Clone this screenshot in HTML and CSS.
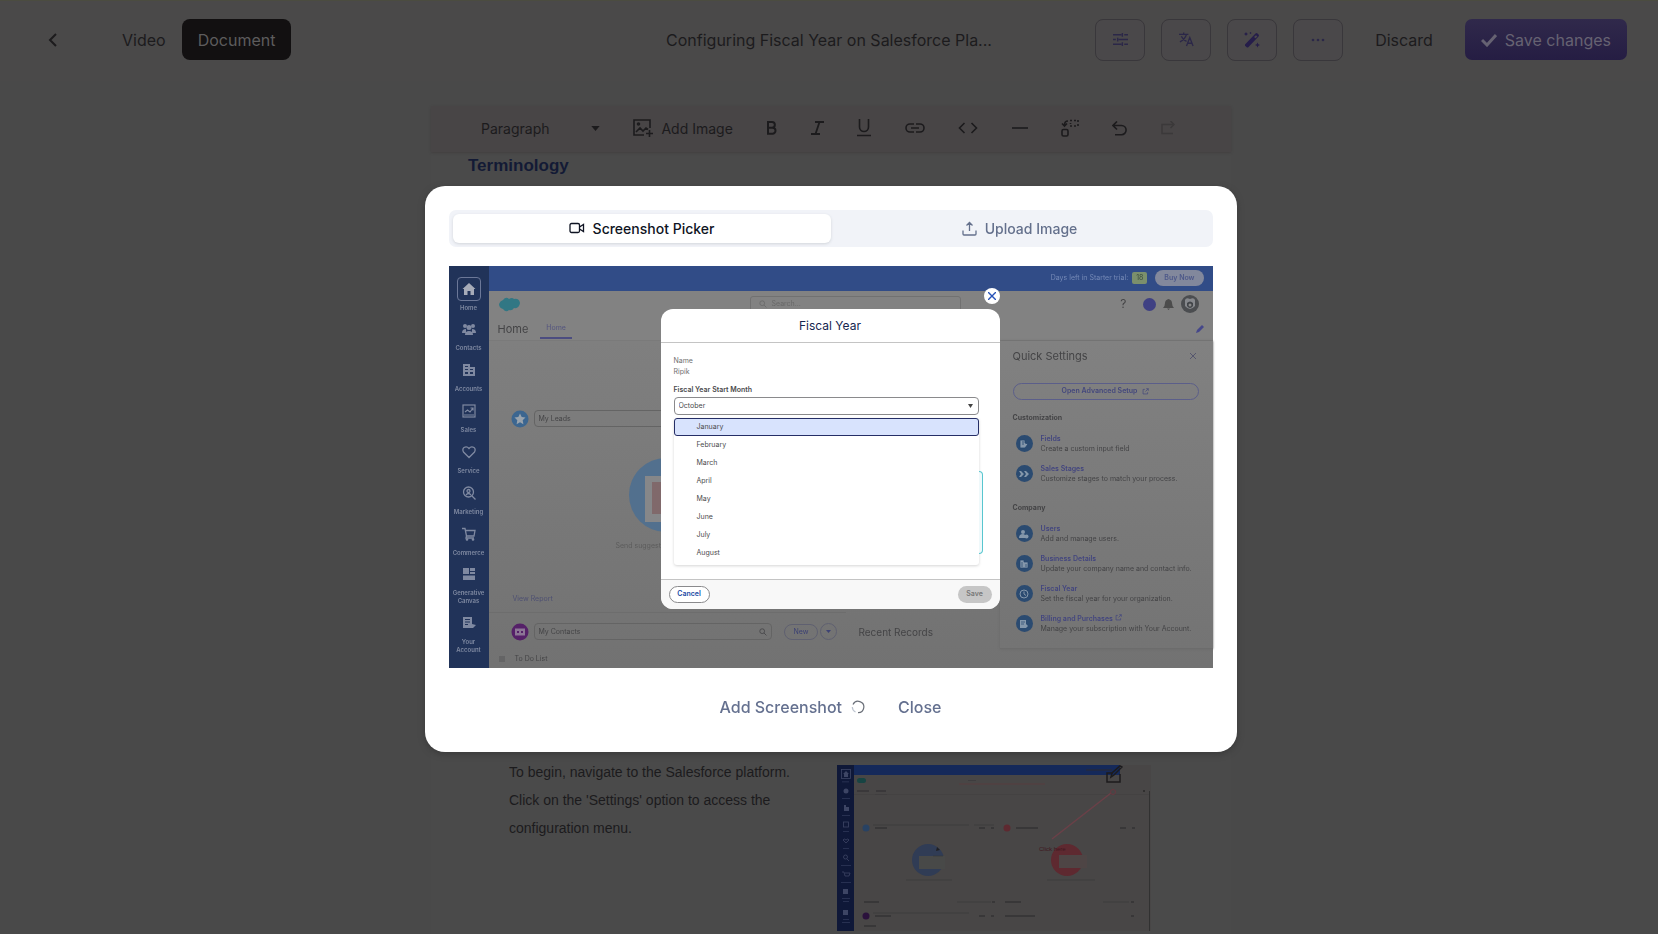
FILE: index.html
```
<!DOCTYPE html>
<html lang="en">
<head>
<meta charset="utf-8">
<title>Configuring Fiscal Year on Salesforce Platform</title>
<link rel="stylesheet" href="styles.css">
</head>
<body>
<svg class="sprite" aria-hidden="true">
  <symbol id="open" viewBox="0 0 10 10"><path d="M4 2H1.500v6.500H8V6M6 1h3v3M9 1 5 5" fill="none" stroke="currentColor"/></symbol>
  <symbol id="mag" viewBox="0 0 10 10"><circle cx="4" cy="4" r="3" fill="none" stroke="currentColor"/><path d="m6.300 6.300 3 3" stroke="currentColor"/></symbol>
  <symbol id="caret" viewBox="0 0 10 6"><path d="M0 0h10L5 6z" fill="currentColor"/></symbol>
</svg>

<header class="topbar">
  <div class="topbar-left">
    <button class="back" aria-label="Back"><svg width="10" height="16" viewBox="0 0 10 16"><path d="M8 2 2 8l6 6" fill="none" stroke="currentColor" stroke-width="2"/></svg></button>
    <nav class="modes">
      <button class="mode">Video</button>
      <button class="mode mode-on">Document</button>
    </nav>
  </div>
  <h1 class="doc-name">Configuring Fiscal Year on Salesforce Pla...</h1>
  <div class="topbar-right">
    <button class="tool" aria-label="Settings"><svg width="15" height="15" viewBox="0 0 16 16" fill="none" stroke="currentColor" stroke-width="1.500"><path d="M0 3h9M12 3h4M0 8h3M6 8h10M0 13h9M12 13h4M10 1v4M5 6v4M10 11v4"/></svg></button>
    <button class="tool" aria-label="Translate"><svg width="15" height="15" viewBox="0 0 16 16" fill="none" stroke="currentColor" stroke-width="1.400"><path d="M0 2.500h10M5 .5v2M8 2.500C7 6 4 9 1 10.500M2.500 4.500C4 8 6 9 8 10M8 15l3.500-9L15 15M9.300 12h4.500"/></svg></button>
    <button class="tool wand" aria-label="Enhance"><svg width="16" height="16" viewBox="0 0 16 16" fill="currentColor"><path d="M1 12.500 11.500 1.500Q12.500.5 13.500 1.500l1 1q1 1 0 2L4.500 15Q3.500 16 2.500 15L1 13.800zM10 5l1.500 1.300 1.800-1.800L12 3.200z" fill-rule="evenodd"/><path d="m2 0 .7 1.300L4 2l-1.300.7L2 4l-.7-1.300L0 2l1.300-.7zM6.500 0l1 1-1 1-1-1zM13.500 10.500l.8 1.700 1.700.8-1.700.8-.8 1.700-.8-1.700L11 13l1.700-.8z"/></svg></button>
    <button class="tool" aria-label="More"><svg width="14" height="4" viewBox="0 0 14 4" fill="currentColor"><circle cx="2" cy="2" r="1.300"/><circle cx="7" cy="2" r="1.300"/><circle cx="12" cy="2" r="1.300"/></svg></button>
    <button class="discard">Discard</button>
    <button class="save"><svg width="16" height="14" viewBox="0 0 16 14"><path d="m1 7 5 5L15 2" fill="none" stroke="currentColor" stroke-width="3"/></svg>Save changes</button>
  </div>
</header>

<main class="doc">
  <div class="editbar">
    <label class="block-type">
      <select aria-label="Block type"><option>Paragraph</option></select>
      <svg width="9" height="5"><use href="#caret"/></svg>
    </label>
    <button class="add-image"><svg width="20" height="18" viewBox="0 0 20 18" fill="none" stroke="currentColor" stroke-width="1.600"><path d="M17 9V1H1v15h10M3 13l4-4 3 3 3-3 2 1.500M16.500 11v7M13 14.500h7"/><circle cx="5.500" cy="5" r="1"/></svg>Add Image</button>
    <button aria-label="Bold"><svg width="11" height="14" viewBox="0 0 11 14" fill="none" stroke="currentColor" stroke-width="2"><path d="M2 1h4a2.700 2.700 0 0 1 0 5.700H2zM2 6.700h4.500a3 3 0 0 1 0 6H2z"/></svg></button>
    <button aria-label="Italic"><svg width="13" height="14" viewBox="0 0 13 14" fill="none" stroke="currentColor" stroke-width="1.800"><path d="M4 1h9M0 13h9M8.500 1l-4 12"/></svg></button>
    <button aria-label="Underline"><svg width="14" height="18" viewBox="0 0 14 18" fill="none" stroke="currentColor" stroke-width="1.600"><path d="M2.500 0v8a4.500 4.500 0 0 0 9 0V0M0 16.500h14"/></svg></button>
    <button aria-label="Link"><svg width="20" height="10" viewBox="0 0 20 10" fill="none" stroke="currentColor" stroke-width="1.600"><path d="M9 1H5a4 4 0 0 0 0 8h4M11 1h4a4 4 0 0 1 0 8h-4M6 5h8"/></svg></button>
    <button aria-label="Code"><svg width="20" height="12" viewBox="0 0 20 12" fill="none" stroke="currentColor" stroke-width="1.600"><path d="M6.500 1 1.500 6l5 5M13.500 1l5 5-5 5"/></svg></button>
    <button aria-label="Divider"><svg width="16" height="2" viewBox="0 0 16 2"><path d="M0 1h16" stroke="currentColor" stroke-width="1.600"/></svg></button>
    <button aria-label="Replace block"><svg width="18" height="18" viewBox="0 0 18 18" fill="none" stroke="currentColor" stroke-width="1.600"><rect x="1" y="10.500" width="6" height="6.500" rx="1.500"/><path d="M7 2Q3.500 2 3.500 6M1 4.500 3.500 7 6 4.500"/><path d="M9 1.500h2M13 1.500h2M17 1v2M17 5v2M9 7h2M13 7h2M9.500 4v1"/></svg></button>
    <button aria-label="Undo"><svg width="15" height="15" viewBox="0 0 15 15" fill="none" stroke="currentColor" stroke-width="1.600"><path d="M5 .5 1 4.500l4 4M1 4.500h8.500a4.600 4.600 0 0 1 0 9.200H3"/></svg></button>
    <button class="off" aria-label="Redo" disabled><svg width="14" height="14" viewBox="0 0 14 14" fill="none" stroke="currentColor" stroke-width="1.500"><path d="M9.500 0 13 3.500 9.500 7M13 3.500H1v9h11"/></svg></button>
  </div>
  <h2 class="section-title">Terminology</h2>
  <section class="step">
    <p>To begin, navigate to the Salesforce platform. Click on the 'Settings' option to access the configuration menu.</p>
    <figure class="step-shot">
      <svg viewBox="0 0 314 166" aria-label="Salesforce home page">
        <rect width="314" height="166" fill="#484646"/>
        <rect width="17" height="166" fill="#0f1838"/><rect x="17" width="266" height="10" fill="#15295a"/>
        <rect x="4.500" y="4.500" width="9" height="9" fill="none" stroke="#3d4564" stroke-width=".8"/>
        <g fill="#3d4564"><path d="m6 9 3-3 3 3h-1v3H7V9z"/><circle cx="9" cy="26" r="2.500"/><path d="M7 40h2v2h3v4H7zM6 145h5v5H6zM6 124h5v5H6z"/></g>
        <path d="M5 16.500h7v.7H5zM5 33h8v.7H5zM5 50h8v.7H5zM6 66h6v.7H6zM6 83h6v.7H6zM4 100h10v.7H4zM4 117h10v.7H4zM5 133h8v.7H5zM6 136h6v.7H6zM6 154h6v.7H6zM5 157h8v.7H5z" fill="#30385a"/>
        <g fill="none" stroke="#3d4564" stroke-width=".8"><rect x="6.500" y="57" width="5" height="5"/><path d="m9 78-3-3q1-2 3 0 2-2 3 0zM5 107h2l1 4h4l1-3H8"/><circle cx="8.500" cy="92" r="2"/><path d="m10 94 2 2"/></g>
        <rect x="20" y="13" width="9" height="5" rx="2.500" fill="#174443"/>
        <path d="M20 26h12M39 26h10M249 5h26" stroke="#2d2b2e"/><path d="M38 29.500h12M131 15.500h8" stroke="#373639" stroke-width=".6"/><path d="M17 29.500h295" stroke="#413f40" stroke-width=".6"/>
        <path d="M122 19h86" stroke="#5a3b3d" stroke-width=".8"/><path d="M312.500 26v140" stroke="#2c2c2c" stroke-width=".8"/>
        <circle cx="29" cy="63" r="3.500" fill="#284263"/><circle cx="91" cy="95" r="16" fill="#303c55"/>
        <circle cx="170" cy="63" r="3.500" fill="#5e2930"/><circle cx="230" cy="95" r="16" fill="#5e2930"/>
        <rect x="82" y="91" width="26" height="13" fill="#484948"/><rect x="222" y="90" width="28" height="13" fill="#4e4545"/>
        <circle cx="29" cy="151" r="3.500" fill="#2b123c"/>
        <path d="M38 63h12M179 63h22M142 63h6M154 63h3M283 63h6M295 63h3M38 151h16M142 151h6M154 151h3M168 151h30M27 137h15M168 137h16M294 151h3M27 161h12M155 137h3M294 137h3" stroke="#29282a"/>
        <path d="M69 115h46M210 115h48M120 137h34M266 137h26M137 60h20M36 148h96M96 91h10M36 60h96" stroke="#363537" stroke-width=".6"/>
        <path d="m100 82 3 3-4 1z" fill="#202023"/>
        <path d="m215 74 59-46" stroke="#6b4048" stroke-width="1.500"/><circle cx="276" cy="27" r="2.500" fill="none" stroke="#683840"/><circle cx="307" cy="26" r="1" fill="#292929"/>
        <text x="202" y="86" class="tip">Click here</text>
      </svg>
      <button class="edit-shot" aria-label="Edit image"><svg width="18" height="18" viewBox="0 0 18 18" fill="none" stroke="currentColor" stroke-width="1.500"><path d="M8 8H2v9h13V9M6 12l1-4L15 1l2 1-8 8z"/></svg></button>
    </figure>
  </section>
</main>

<div class="backdrop">
<div class="modal" role="dialog" aria-label="Add screenshot">
  <div class="tabs" role="tablist">
    <button class="tab tab-on" role="tab" aria-selected="true"><svg width="16" height="12" viewBox="0 0 16 12" fill="none" stroke="currentColor" stroke-width="1.300"><rect x="1" y="1.500" width="9.500" height="9" rx="1.500"/><path d="m10.500 5 4-2.500v7l-4-2.500"/></svg>Screenshot Picker</button>
    <button class="tab" role="tab" aria-selected="false"><svg width="15" height="15" viewBox="0 0 15 15" fill="none" stroke="currentColor" stroke-width="1.300"><path d="M1 9.500V13q0 1 1 1h11q1 0 1-1V9.500M7.500 10V1.500M4.500 4.500l3-3 3 3"/></svg>Upload Image</button>
  </div>

  <div class="shot">
    <aside class="rail">
      <div class="rail-item"><span class="home-box"><svg width="14" height="14" viewBox="0 0 14 14" fill="currentColor"><path d="m7 1 6.500 6H12v6H8.500V9h-3v4H2V7H.5z"/></svg></span>Home</div>
      <div class="rail-item"><svg width="14" height="14" viewBox="0 0 14 14" fill="currentColor"><circle cx="3" cy="4" r="2"/><circle cx="11" cy="4" r="2"/><circle cx="7" cy="5.500" r="2.500"/><path d="M0 11q0-4 4-4v4zM14 11q0-4-4-4v4zM3 13q0-4 4-4t4 4z"/></svg>Contacts</div>
      <div class="rail-item"><svg width="14" height="14" viewBox="0 0 14 14" fill="none" stroke="currentColor" stroke-width="2"><path d="M2 13V2h5v11M7 5h5v8M1 12h12M3 5h3M3 8h9"/></svg>Accounts</div>
      <div class="rail-item"><svg width="14" height="14" viewBox="0 0 14 14" fill="none" stroke="currentColor" stroke-width="1.200"><rect x="1" y="1" width="12" height="12"/><path d="m3 8 2.500-2L8 8l3-4M8.500 4H11v2.500M2 11h10"/></svg>Sales</div>
      <div class="rail-item"><svg width="14" height="14" viewBox="0 0 14 14" fill="none" stroke="currentColor" stroke-width="1.300"><path d="M7 12.500 1.500 7Q0 4 2 2.500q3-1.500 5 1 2-2.500 5-1Q14 4 12.500 7z"/></svg>Service</div>
      <div class="rail-item"><svg width="14" height="14" viewBox="0 0 14 14" fill="none" stroke="currentColor" stroke-width="1.300"><circle cx="6.500" cy="6" r="5"/><circle cx="6.500" cy="5" r="1.500"/><path d="M4 9q2.500-3 5 0M10 10l3.500 3.500"/></svg>Marketing</div>
      <div class="rail-item"><svg width="14" height="14" viewBox="0 0 14 14" fill="none" stroke="currentColor" stroke-width="1.300"><path d="M0 1.500h3L4.500 9H12l1-5.500H3.500M4.500 9 4 11h8"/><circle cx="5" cy="12.500" r=".7"/><circle cx="11" cy="12.500" r=".7"/></svg>Commerce</div>
      <div class="rail-item rail-tall"><svg width="14" height="14" viewBox="0 0 14 14" fill="currentColor"><path d="M1 1h6v6H1zM8 1h5v3H8zM8 5h5v2H8zM1 8.500h12V13H1z"/></svg>Generative Canvas</div>
      <div class="rail-item rail-tall"><svg width="14" height="14" viewBox="0 0 14 14" fill="currentColor"><path d="M1 1h9v7l4 1-3 3H1zM3 3v1h5V3zM3 5.500v1h5v-1zM3 8v1h3V8z" fill-rule="evenodd"/></svg>Your Account</div>
    </aside>
    <div class="app">
      <div class="trial">Days left in Starter trial: <b>18</b><span class="buy">Buy Now</span></div>
      <div class="app-head">
        <div class="app-search"><svg width="8" height="8"><use href="#mag"/></svg>Search...</div>
        <svg class="cloud" width="21" height="15" viewBox="0 0 21 15"><path d="M4 3q3-4 6-1 3-2 5 0 5-1 6 4-1 6-6 5-2 3-5 2-3 3-6-1-4-1-4-5 1-3 4-4z" fill="currentColor"/></svg>
        <div class="app-icons">
          <span class="help">?</span><span class="dot"></span>
          <svg width="11" height="11" viewBox="0 0 11 11" fill="#4c4c4c"><path d="M0 9q2-2 2-5 0-3 3.500-4Q9 1 9 4q0 3 2 5zM4 9.500h3L5.500 11z"/></svg>
          <svg width="18" height="18" viewBox="0 0 18 18"><circle cx="9" cy="9" r="9" fill="#4b4d50"/><path d="M4 5q1-3 5-1 4-2 5 1v6q-5 6-10 0z" fill="#85878b"/><path d="M6 8q3-3 6 0v3q-3 4-6 0z" fill="#414448"/><circle cx="9" cy="10" r="1.500" fill="#8a8a8a"/></svg>
        </div>
      </div>
      <div class="app-nav"><span class="app-title">Home</span><span class="app-tab">Home</span><svg width="8" height="8" viewBox="0 0 8 8"><path d="M0 8 1 5l5-5 2 2-5 5z" fill="#45478a"/></svg></div>
      <div class="app-body">
        <div class="cards">
          <div class="card">
            <div class="finder"><svg width="18" height="18" viewBox="0 0 18 18"><circle cx="9" cy="9" r="8.500" fill="#3c6690"/><path d="m9 3.500 1.700 3.600 3.800.5-2.800 2.700.7 3.900L9 12.300l-3.400 1.900.7-3.900L3.500 7.600l3.800-.5z" fill="#99a3ad"/></svg><span class="find-box">My Leads</span></div>
            <svg class="art" width="74" height="74" viewBox="0 0 74 74"><circle cx="37" cy="37" r="37" fill="#52708e"/><rect x="16" y="18" width="42" height="46" fill="#868789"/><rect x="23" y="24" width="35" height="32" fill="#80696b"/></svg>
            <p class="hint">Send suggest</p>
            <span class="report">View Report</span>
          </div>
          <div class="card-row">
            <div class="finder grow"><svg width="18" height="18" viewBox="0 0 18 18"><circle cx="9" cy="9" r="8.500" fill="#552068"/><path d="M4 5.500h10v7H4z" fill="#8c7595"/><path d="M6 8h2v2H6zM10 8h2v2h-2z" fill="#552068"/></svg><span class="find-box">My Contacts<svg width="8" height="8"><use href="#mag"/></svg></span></div>
            <span class="new">New</span><span class="new-more"><svg width="5" height="3"><use href="#caret"/></svg></span>
            <span class="recent">Recent Records</span>
          </div>
          <div class="todo"><svg width="6" height="6" viewBox="0 0 6 6"><path d="M0 1h6M0 3h6M0 5h6" stroke="currentColor" stroke-width=".6"/></svg>To Do List</div>
        </div>
        <div class="quick">
          <div class="quick-head">Quick Settings<svg width="6" height="6" viewBox="0 0 6 6"><path d="m0 0 6 6M6 0 0 6" stroke="#55566e"/></svg></div>
          <div class="advanced">Open Advanced Setup<svg width="7" height="7"><use href="#open"/></svg></div>
          <h4>Customization</h4>
          <ul>
            <li><i><svg width="10" height="10" viewBox="0 0 10 10"><path d="M1 1h5v3l3 1-3 4H1zM3 3h2M3 5h2" fill="#8497ab" stroke="#24466e" stroke-width=".8"/></svg></i><p><b>Fields</b>Create a custom input field</p></li>
            <li><i><svg width="10" height="10" viewBox="0 0 10 10"><path d="M0 2h2l3 3-3 3H0l2-3zM5 2h2l3 3-3 3H5l2-3z" fill="#8497ab"/></svg></i><p><b>Sales Stages</b>Customize stages to match your process.</p></li>
          </ul>
          <h4>Company</h4>
          <ul>
            <li><i><svg width="10" height="10" viewBox="0 0 10 10" fill="#8497ab"><circle cx="4" cy="3" r="2"/><path d="M0 9q0-4 4-4 1 0 2 1v3z"/><circle cx="7.500" cy="7.500" r="2"/></svg></i><p><b>Users</b>Add and manage users.</p></li>
            <li><i><svg width="10" height="10" viewBox="0 0 10 10"><path d="M1 9V1h4v2h4v6zM3 3v5M7 5v3" fill="#8497ab" stroke="#24466e" stroke-width=".7"/></svg></i><p><b>Business Details</b>Update your company name and contact info.</p></li>
            <li><i><svg width="10" height="10" viewBox="0 0 10 10" fill="none" stroke="#8497ab"><circle cx="5" cy="5" r="4"/><path d="M5 2.500V5l2 1.500"/></svg></i><p><b>Fiscal Year</b>Set the fiscal year for your organization.</p></li>
            <li><i><svg width="10" height="10" viewBox="0 0 10 10"><path d="M1 1h6v4l2 2-2 2H1z" fill="#8497ab"/><path d="M2 3h4M2 5h3" stroke="#24466e" stroke-width=".7"/></svg></i><p><b>Billing and Purchases <svg width="7" height="7"><use href="#open"/></svg></b>Manage your subscription with Your Account.</p></li>
          </ul>
        </div>
      </div>
    </div>

    <div class="fiscal">
      <button class="fiscal-x" aria-label="Close Fiscal Year"><svg width="8" height="8" viewBox="0 0 8 8"><path d="m0 0 8 8M8 0 0 8" stroke="currentColor" stroke-width="1.400"/></svg></button>
      <h3>Fiscal Year</h3>
      <div class="fiscal-body">
        <dl><dt>Name</dt><dd>Ripik</dd></dl>
        <label class="month-label" for="month">Fiscal Year Start Month</label>
        <div class="month">
          <select id="month"><option>October</option></select>
          <svg width="5" height="4" viewBox="0 0 5 4"><path d="M0 0h5L2.500 4z" fill="#444"/></svg>
        </div>
        <div class="month-area">
          <ul class="months" role="listbox" aria-label="Months">
            <li class="picked" role="option" aria-selected="true">January</li>
            <li role="option">February</li><li role="option">March</li><li role="option">April</li>
            <li role="option">May</li><li role="option">June</li><li role="option">July</li><li role="option">August</li>
          </ul>
          <div class="note"></div>
        </div>
      </div>
      <div class="fiscal-foot"><button class="cancel">Cancel</button><button class="fsave">Save</button></div>
    </div>
  </div>

  <div class="modal-foot">
    <button>Add Screenshot<svg width="14" height="14" viewBox="0 0 14 14" fill="none"><path d="M2 4.500A5.700 5.700 0 1 1 7 12.700" stroke="#6a6f78" stroke-width="1.200"/><path d="M1.300 7A5.700 5.700 0 0 0 4.500 12" stroke="#bcc3cf" stroke-width="1.200"/></svg></button>
    <button>Close</button>
  </div>
</div>
</div>
</body>
</html>
```
FILE: styles.css
```
* { box-sizing: border-box; }
body { display: flex; flex-direction: column; margin: 0; height: 100vh; overflow: hidden; background: #494949; color: #1c1b1d; font-family: Inter, "Liberation Sans", sans-serif; border-top: 1px solid #4b4c40; }
button, select { font: inherit; color: inherit; background: none; border: 0; padding: 0; }
button { display: flex; align-items: center; justify-content: center; }
h1, h2, h3, h4, p, ul, dl, dd, figure { margin: 0; padding: 0; }
ul { list-style: none; }
svg { flex: none; }
.sprite { display: none; }

.topbar { display: grid; grid-template-columns: 1fr auto 1fr; align-items: center; height: 80px; padding: 0 31px 3px; background: #4a4949; font-size: 16px; }
.topbar-left, .topbar-right, .modes { display: flex; align-items: center; }
.back { margin: 0 48px 0 17px; }
.mode { height: 41px; padding: 0 16px; border-radius: 8px; }
.mode-on { background: #121011; color: #5d5c5d; }
.doc-name { font-size: 16px; font-weight: 400; }
.topbar-right { justify-content: flex-end; gap: 16px; }
.tool { width: 50px; height: 42px; border: 1px solid #39373b; border-radius: 8px; background: #4a484a; color: #2b2748; }
.wand { color: #251d4a; }
.discard { padding: 0 16px; }
.save { height: 41px; gap: 8px; padding: 0 16px; border-radius: 7px; background: linear-gradient(#30294b, #251d43); color: #666272; }

.doc { flex: 1; min-height: 0; width: 800px; max-width: 100%; margin: 25px 0 0 calc(50% - 398px); background: #4a4a4a; }
.editbar { display: flex; align-items: center; justify-content: space-between; height: 46px; padding: 0 56px 2px 50px; background: #484546; font-size: 14px; box-shadow: 0 1px 2px #423f40; }
.block-type { display: flex; align-items: center; width: 119px; }
.block-type select { appearance: none; flex: 1; }
.add-image { gap: 8px; }
.off { color: #3b393a; }
.section-title { padding: 4px 37px; font: bold 17px/20px "Liberation Sans", Arial, sans-serif; color: #131a35; }
.step { display: flex; justify-content: space-between; margin-top: 578px; padding: 0 80px 0 78px; font: 14px/28px "Liberation Sans", Arial, sans-serif; }
.step p { width: 290px; }
.step-shot { position: relative; width: 314px; margin: 7px 0 0 16px; }
.step-shot > svg { display: block; width: 100%; }
.tip { font: 6px "Liberation Sans", sans-serif; fill: #3f1820; }
.edit-shot { position: absolute; top: 0; right: 28px; }

.backdrop { position: fixed; inset: 0; display: flex; align-items: center; justify-content: center; padding: 3px 0 0 3px; }
.modal { width: 812px; max-width: 100%; padding: 24px; border-radius: 20px; background: #fff; box-shadow: 0 2px 6px #3a3a3a; }
.tabs { display: flex; padding: 4px; border-radius: 7px; background: #f1f3f8; font-size: 14px; font-weight: 500; color: #64708c; }
.tab { flex: 1; gap: 8px; height: 29px; border-radius: 6px; }
.tab-on { background: #fff; color: #0f1423; box-shadow: 0 1px 3px #d2d5da; }

.shot { position: relative; display: flex; margin-top: 19px; height: 402px; color: #444446; font-size: 7px; line-height: 10px; background: #828282; }
.rail { width: 40px; padding-top: 8px; background: #213359; color: #7f89a1; font-size: 6px; line-height: 8px; font-weight: 600; text-align: center; }
.rail-item { display: flex; flex-direction: column; align-items: center; justify-content: flex-end; gap: 8px; height: 41px; padding-bottom: 1px; }
.rail-item:first-child { height: 38px; gap: 3px; padding-bottom: 0; }
.rail-tall { height: 49px; padding: 0 4px 2px; }
.home-box { display: flex; align-items: center; justify-content: center; width: 24px; height: 24px; border: 1px solid #6c7898; border-radius: 4px; color: #a6abb8; }
.app { flex: 1; display: flex; flex-direction: column; min-width: 0; }
.trial { display: flex; align-items: center; justify-content: flex-end; gap: 4px; height: 25px; padding-right: 9px; background: #314c87; color: #7589b6; }
.trial b { padding: 1px 4px; border-radius: 2px; background: #7b8f6c; color: #37493d; font-weight: 400; }
.buy { margin-left: 4px; padding: 3px 9px; border-radius: 9px; background: #82889c; color: #4d5889; font-weight: 600; }
.app-head { display: grid; grid-template-columns: 261px 211px 1fr; align-items: center; height: 27px; padding-right: 14px; }
.cloud { grid-column: 1; grid-row: 1; margin-left: 10px; color: #317784; }
.app-search { grid-column: 2; grid-row: 1; display: flex; align-items: center; gap: 5px; height: 17px; padding-left: 8px; border: 1px solid #717171; border-radius: 3px; color: #686868; }
.app-icons { grid-column: 3; display: flex; align-items: center; justify-content: flex-end; gap: 7px; }
.help { font-size: 12px; margin-right: 9px; }
.dot { width: 13px; height: 13px; border-radius: 50%; background: #3f4083; }
.app-nav { display: flex; align-items: center; height: 23px; padding: 0 9px; border-bottom: 1px solid #7a7a7a; }
.app-title { font-size: 11px; margin-right: 12px; }
.app-tab { margin: 3px auto 0 0; padding: 2px 6px 4px; border-bottom: 2px solid #4c4d80; color: #54557f; }
.app-body { flex: 1; display: flex; min-height: 0; background: linear-gradient(#7f7f7f, #727272); }
.cards { flex: 1; display: flex; flex-direction: column; }
.card { display: flex; flex-direction: column; width: 357px; padding: 69px 0 0 22px; height: 272px; border-bottom: 1px solid #6d6d6d; }
.finder { display: flex; align-items: center; gap: 5px; }
.find-box { flex: 1; display: flex; align-items: center; justify-content: space-between; height: 17px; padding: 0 4px; border: 1px solid #646464; border-radius: 4px; }
.art { margin: 30px 0 0 118px; }
.hint { padding: 9px 0 0 105px; white-space: nowrap; color: #5c5c5c; }
.report { margin-top: 43px; padding-left: 2px; color: #4e5072; }
.card-row { display: flex; align-items: center; height: 38px; padding-left: 22px; }
.grow { width: 261px; }
.new { margin-left: 12px; padding: 2px 9px; border: 1px solid #5f6070; border-radius: 9px; color: #3d4274; }
.new-more { display: flex; align-items: center; justify-content: center; width: 17px; height: 17px; margin-left: 2px; border: 1px solid #5f6070; border-radius: 50%; color: #3d4274; }
.recent { margin-left: 21px; font-size: 10px; white-space: nowrap; }
.todo { display: flex; gap: 10px; align-items: center; padding: 3px 0 0 10px; }
.quick { width: 213px; height: 308px; padding: 8px 14px 0 13px; background: linear-gradient(#818181, #747474); border-bottom: 1px solid #6c6c6c; box-shadow: 0 0 2px #686868; }
.quick-head { display: flex; align-items: center; justify-content: space-between; font-size: 11px; line-height: 14px; padding-right: 3px; }
.advanced { display: flex; align-items: center; justify-content: center; gap: 5px; height: 17px; margin: 20px 0 13px; border: 1px solid #5b5e8a; border-radius: 9px; color: #43477d; font-weight: 600; }
.quick h4 { font-size: 7px; line-height: 10px; }
.quick li { display: flex; align-items: center; gap: 8px; height: 30px; padding-left: 3px; }
.quick ul { padding: 6px 0 14px; }
.quick i { display: flex; align-items: center; justify-content: center; width: 17px; height: 17px; border-radius: 50%; background: #2b4b71; }
.quick b { display: block; color: #43467f; font-weight: 600; }
.quick p { white-space: nowrap; }

.fiscal { position: absolute; top: 43px; left: 212px; width: 339px; border-radius: 12px; background: #fff; }
.fiscal-x { position: absolute; top: -21px; right: 0; width: 16px; height: 16px; border-radius: 50%; background: #fff; color: #2752b8; }
.fiscal h3 { height: 34px; border-bottom: 1px solid #c4c4c4; font-size: 12px; line-height: 33px; font-weight: 400; text-align: center; color: #15264f; }
.fiscal-body { padding: 12px 17px 14px 13px; color: #4a4a4c; }
.fiscal dl { line-height: 11px; color: #707070; }
.month-label { display: block; margin: 8px 0 2px; font-weight: 600; line-height: 10px; }
.month { display: flex; align-items: center; width: 305px; height: 18px; padding: 0 5px 0 4px; border: 1px solid #8a8a8c; border-radius: 4px; }
.month select { appearance: none; flex: 1; }
.month-area { display: flex; align-items: flex-end; margin-top: 3px; }
.months { width: 305px; border-radius: 3px; box-shadow: 0 1px 3px #d5d5d5; padding-bottom: 3px; }
.months li { height: 18px; padding-left: 23px; line-height: 18px; }
.months .picked { border: 1px solid #252e66; border-radius: 3px; background: #d8e3fd; padding-left: 22px; line-height: 16px; }
.note { width: 4px; height: 83px; margin-bottom: 11px; border: solid #58c6cf; border-width: 1px 1px 1px 0; border-radius: 0 4px 4px 0; background: #eff9fb; }
.fiscal-foot { display: flex; justify-content: space-between; padding: 6px 8px; border-top: 1px solid #c4c4c4; border-radius: 0 0 12px 12px; background: #f8f8f8; font-weight: 600; }
.cancel { width: 41px; height: 17px; border: 1px solid #8a8a8c; border-radius: 9px; background: #fff; color: #214aa5; }
.fsave { width: 34px; height: 17px; border-radius: 9px; background: #c6c6c6; color: #777; }

.modal-foot { display: flex; justify-content: center; gap: 33px; padding: 27px 0 9px; color: #64708f; font-size: 16px; line-height: 24px; font-weight: 500; }
.modal-foot button { gap: 9px; }
```
